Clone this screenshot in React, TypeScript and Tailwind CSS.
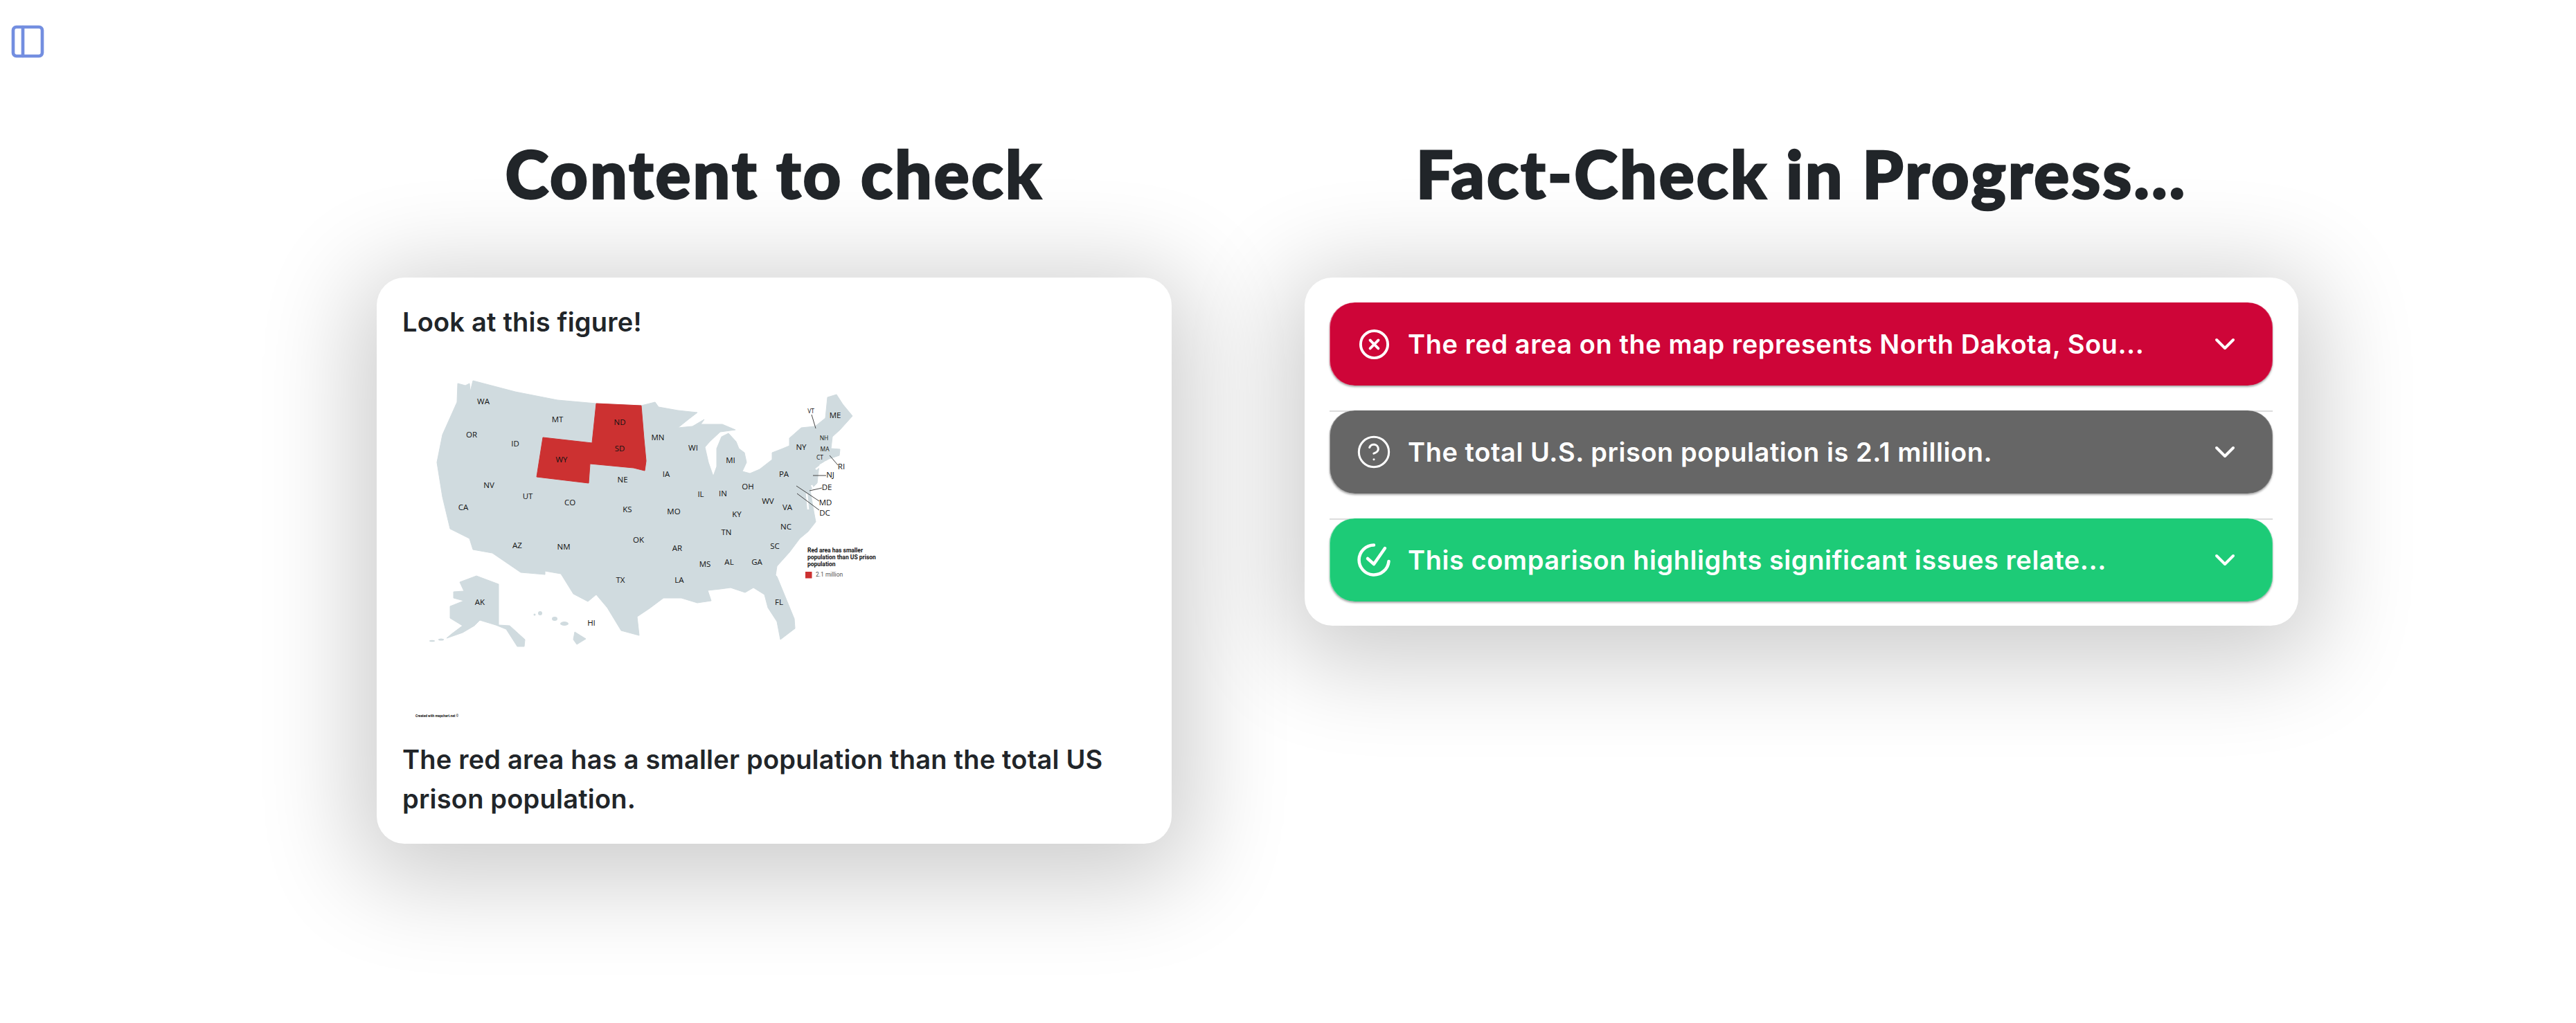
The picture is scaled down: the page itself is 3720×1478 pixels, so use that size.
import { ChevronDown, CircleHelp, CircleX, PanelLeft } from 'lucide-react';

const LAND =
  '661,553 672,556 678,553 679,565 683,549 744,565 805,577 861,582 926,585 946,580 951,587 979,592 1007,595 994,605 979,617 1000,615 1017,605 1012,612 1043,612 1062,620 1040,623 1025,637 1018,645 1023,667 1030,687 1035,673 1035,647 1042,630 1052,625 1063,637 1067,647 1075,653 1078,667 1072,680 1083,683 1097,677 1115,663 1115,653 1128,648 1140,643 1140,632 1157,617 1177,615 1192,603 1195,573 1208,569 1217,583 1231,600 1213,620 1202,630 1200,647 1213,648 1212,657 1197,662 1183,670 1180,697 1170,707 1175,737 1178,753 1167,767 1155,777 1140,797 1122,817 1120,830 1122,832 1147,893 1148,907 1127,923 1122,897 1109,877 1104,858 1088,848 1076,855 1055,848 1040,850 1022,852 1027,867 1007,870 984,863 958,863 938,878 920,890 923,917 897,910 877,877 861,858 849,868 828,857 810,828 787,824 787,829 752,826 711,798 683,793 678,777 650,763 639,717 631,667 639,627 660,580';
const RED = '861,582 926,585 930,633 933,665 931,679 915,675 852,669 850,697 775,688 784,631 855,639';
const ALASKA =
  '664,840 688,831 720,843 720,902 736,903 758,923 757,933 747,933 731,908 716,902 693,895 685,903 668,913 645,921 652,915 668,903 650,892 650,875 670,867 655,863 655,854 670,853';

const STATES: [string, number, number][] = [
  ['WA', 698, 579], ['MT', 805, 605], ['ND', 895, 609], ['OR', 681, 627], ['ID', 744, 640], ['MN', 950, 631],
  ['SD', 895, 647], ['WI', 1001, 646], ['NY', 1157, 645], ['MI', 1055, 664], ['WY', 811, 663], ['PA', 1132, 684],
  ['IA', 962, 684], ['NE', 899, 692], ['NV', 706, 700], ['OH', 1080, 702], ['IL', 1012, 713], ['IN', 1044, 712],
  ['UT', 762, 716], ['WV', 1109, 723], ['CO', 823, 725], ['CA', 669, 732], ['VA', 1137, 732], ['KS', 906, 735],
  ['MO', 973, 738], ['KY', 1064, 742], ['NC', 1135, 760], ['TN', 1049, 768], ['OK', 922, 779], ['SC', 1119, 788],
  ['AZ', 747, 787], ['NM', 814, 789], ['AR', 978, 791], ['MS', 1018, 814], ['AL', 1053, 811], ['GA', 1093, 811],
  ['TX', 896, 837], ['LA', 981, 837], ['FL', 1125, 869], ['AK', 693, 869], ['HI', 854, 899], ['ME', 1206, 599],
  ['RI', 1215, 673], ['NJ', 1199, 685], ['DE', 1194, 703], ['MD', 1192, 725], ['DC', 1191, 740],
];
const SMALL_STATES: [string, number, number][] = [
  ['VT', 1171, 593], ['NH', 1190, 632], ['MA', 1191, 648], ['CT', 1184, 660],
];
const LEADERS = [
  [1172, 598, 1178, 618], [1198, 657, 1210, 671], [1174, 686, 1193, 686],
  [1169, 708, 1187, 704], [1150, 701, 1183, 723], [1151, 712, 1183, 736],
];

function UsMap() {
  return (
    <svg viewBox="581 493 1074 575" className="block w-[1074px] h-[575px]" fontFamily="'Open Sans', sans-serif">
      <polygon points={LAND} fill="#d0dbdf" stroke="#d0dbdf" strokeLinejoin="round" />
      <polygon points={ALASKA} fill="#d0dbdf" stroke="#d0dbdf" strokeLinejoin="round" />
      <polygon points="830,912 846,922 833,930 828,923" fill="#d0dbdf" stroke="#d0dbdf" strokeLinejoin="round" />
      <ellipse cx="815" cy="900" rx="6" ry="3" fill="#d0dbdf" />
      <ellipse cx="801" cy="893" rx="4" ry="3" fill="#d0dbdf" />
      <circle cx="780" cy="885" r="3" fill="#d0dbdf" />
      <circle cx="772" cy="887" r="1.5" fill="#d0dbdf" />
      <ellipse cx="637" cy="923" rx="4" ry="1.5" fill="#d0dbdf" />
      <ellipse cx="624" cy="925" rx="4" ry="1.2" fill="#d0dbdf" />
      <path d="M1193 666 1178 677M1165 712 1167 735M1172 700 1176 708" stroke="#fff" strokeWidth="2.5" fill="none" />
      <polygon points={RED} fill="#cc3131" stroke="#cc3131" strokeLinejoin="round" />
      {LEADERS.map(([x1, y1, x2, y2]) => (
        <line key={`${x1}-${y1}`} x1={x1} y1={y1} x2={x2} y2={y2} stroke="#444" strokeWidth="1" />
      ))}
      {STATES.map(([name, x, y]) => (
        <text key={name} x={x} y={y + 4} textAnchor="middle" fontSize="11.5" fill="#111">
          {name}
        </text>
      ))}
      {SMALL_STATES.map(([name, x, y]) => (
        <text key={name} x={x} y={y + 3} textAnchor="middle" fontSize="8.5" fill="#111">
          {name}
        </text>
      ))}
      <g fontFamily="Roboto, sans-serif">
        <g fontSize="8.5" fontWeight="700" fill="#111">
          <text x="1166" y="797">Red area has smaller</text>
          <text x="1166" y="807">population than US prison</text>
          <text x="1166" y="817">population</text>
        </g>
        <rect x="1163" y="825" width="9.5" height="9.5" fill="#cc3131" />
        <text x="1178" y="832" fontSize="8.5" fill="#555">2.1 million</text>
        <text x="600" y="1035" fontSize="4.8" fontWeight="700" fill="#111">Created with mapchart.net ©</text>
      </g>
    </svg>
  );
}

function CheckBadge() {
  return (
    <svg width="48" height="48" viewBox="0 0 48 48" fill="none" stroke="currentColor" strokeWidth="4.5" strokeLinecap="round" strokeLinejoin="round" className="shrink-0">
      <path d="M24 2.5A21.5 21.5 0 1 0 45.5 26" />
      <path d="M15 22l9 8 16-23" />
    </svg>
  );
}

const CLAIMS = [
  {
    text: 'The red area on the map represents North Dakota, Sou...',
    color: 'bg-[#ce0538]',
    icon: <CircleX size={47} strokeWidth={2} className="shrink-0" />,
  },
  {
    text: 'The total U.S. prison population is 2.1 million.',
    color: 'bg-[#666666]',
    icon: <CircleHelp size={52} strokeWidth={1.4} className="shrink-0" />,
  },
  {
    text: 'This comparison highlights significant issues relate...',
    color: 'bg-[#1dcb77]',
    icon: <CheckBadge />,
  },
];

export default function App() {
  return (
    <div className="w-[3720px] h-[1478px] overflow-hidden bg-white font-[family-name:Inter,sans-serif] text-[#212529]">
      <div className="pl-[12px] pt-[32px] h-[89px]">
        <PanelLeft size={56} strokeWidth={2} className="text-[#738ee0]" />
      </div>

      <div className="flex items-start gap-[192px] pl-[544px]">
        <section className="w-[1148px]">
          <h1 className="h-[312px] pt-[104px] text-center font-[family-name:Lato,sans-serif] font-black text-[95px] leading-[114px] tracking-[3px] [-webkit-text-stroke:2.5px_#212529]">
            Content to check
          </h1>
          <div className="rounded-[40px] bg-white px-[37px] py-[36px] shadow-[0_24px_140px_30px_rgba(0,0,0,0.2)]">
            <p className="text-[38px] leading-[57px] font-semibold tracking-[0.2px]">Look at this figure!</p>
            <UsMap />
            <p className="text-[38px] leading-[57px] font-semibold tracking-[0.2px]">
              The red area has a smaller population than the total US prison population.
            </p>
          </div>
        </section>

        <section className="w-[1435px]">
          <h1 className="h-[312px] pt-[104px] text-center font-[family-name:Lato,sans-serif] font-black text-[95px] leading-[114px] tracking-[3px] [-webkit-text-stroke:2.5px_#212529]">
            Fact-Check in Progress...
          </h1>
          <div className="flex flex-col rounded-[40px] bg-white pt-[36px] pl-[36px] pr-[37px] pb-[35px] shadow-[0_24px_140px_30px_rgba(0,0,0,0.2)]">
            {CLAIMS.map((claim, index) => (
              <div key={claim.text} className={index > 0 ? 'mt-[36px] h-[120px] border-t-2 border-[#dddddd]' : 'h-[120px]'}>
                <div className={`flex h-[120px] items-center justify-between rounded-[36px] pl-[40px] pr-[45px] text-white shadow-[0_2px_3px_rgba(0,0,0,0.35),inset_1px_0_0_rgba(255,255,255,0.4),inset_-1px_0_0_rgba(255,255,255,0.2)] ${index > 0 ? '-mt-[2px]' : ''} ${claim.color}`}>
                  <div className="flex items-center gap-[25px]">
                    <div className="flex w-[48px] items-center justify-center">{claim.icon}</div>
                    <span className="text-[38px] leading-[57px] font-semibold tracking-[0.55px]">{claim.text}</span>
                  </div>
                  <ChevronDown size={48} strokeWidth={2} />
                </div>
              </div>
            ))}
          </div>
        </section>
      </div>
    </div>
  );
}
